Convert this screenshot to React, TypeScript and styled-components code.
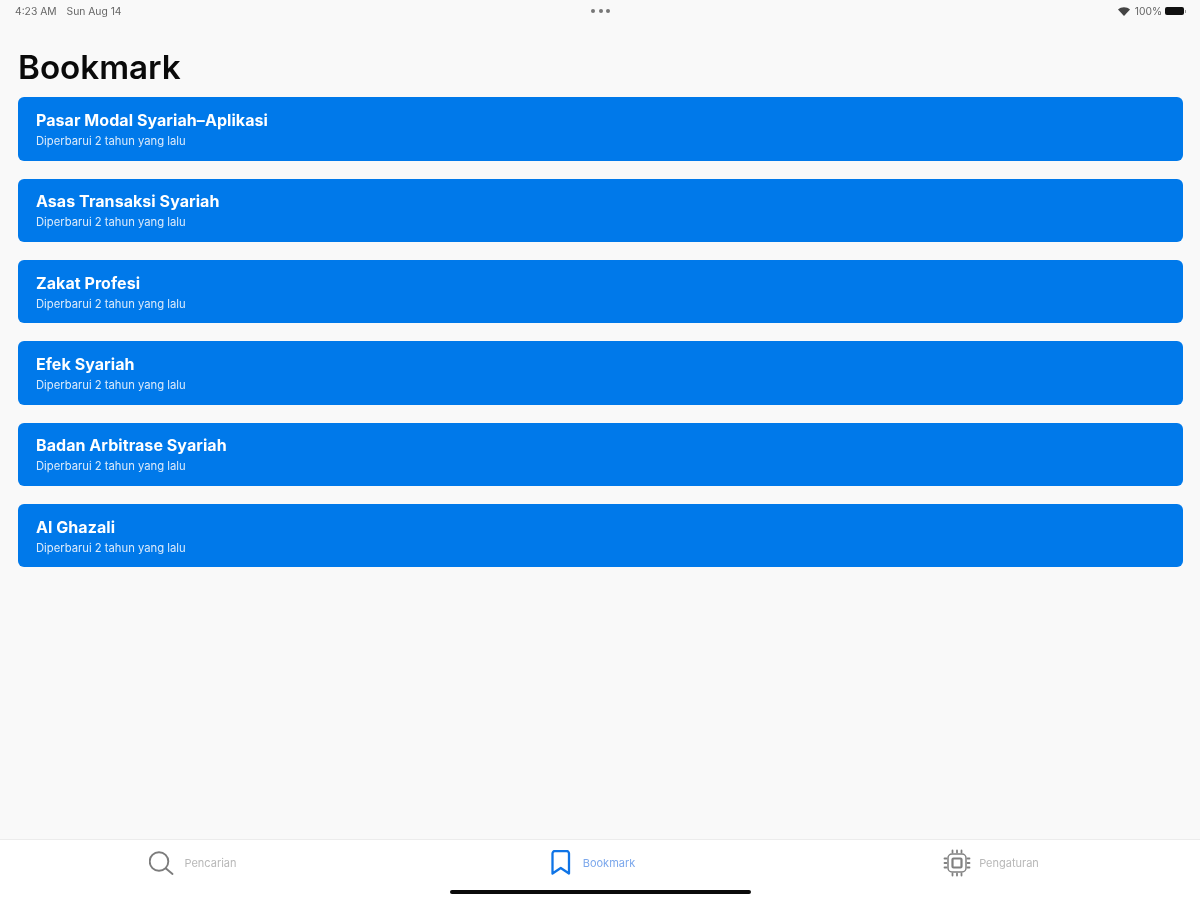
import React from "react";
import styled, { createGlobalStyle } from "styled-components";

const Global = createGlobalStyle`
  html, body { margin: 0; padding: 0; background: #f9f9f9; }
  body { font-family: Inter, "Liberation Sans", sans-serif; }
`;

const Screen = styled.div`
  width: 1200px;
  height: 900px;
  display: flex;
  flex-direction: column;
  overflow: hidden;
  background: #f9f9f9;
  filter: blur(0.7px);
`;

const StatusBar = styled.div`
  height: 22px;
  padding: 0 14px 0 15px;
  display: grid;
  grid-template-columns: 1fr auto 1fr;
  align-items: center;
  color: #666;
  font-size: 10.3px;
  flex: none;
`;

const StatusLeft = styled.div`
  display: flex;
  gap: 10px;
`;

const StatusDots = styled.div`
  display: flex;
  gap: 3.3px;
`;

const Dot = styled.span`
  width: 4px;
  height: 4px;
  border-radius: 50%;
  background: #777;
`;

const StatusRight = styled.div`
  display: flex;
  justify-content: flex-end;
  align-items: center;
  gap: 3px;
`;

const WifiGlyph = styled.svg`
  width: 12px;
  height: 9px;
  margin-right: 2px;
  fill: #444;
`;

const Battery = styled.span`
  width: 19px;
  height: 8px;
  border-radius: 2px;
  background: #111;
  margin-right: 2px;
  position: relative;
  &::after {
    content: "";
    position: absolute;
    right: -2px;
    top: 2.5px;
    width: 1.5px;
    height: 3px;
    background: #999;
  }
`;

const Main = styled.main`
  flex: 1;
  padding: 0 17px 0 18px;
  min-height: 0;
`;

const Title = styled.h1`
  margin: 0;
  padding-top: 25px;
  height: 50.3px;
  box-sizing: content-box;
  font-size: 33.2px;
  line-height: 41px;
  font-weight: 600;
  color: #0a0a0a;
`;

const List = styled.div`
  display: flex;
  flex-direction: column;
  gap: 18px;
`;

const Card = styled.div`
  height: 63.33px;
  box-sizing: border-box;
  padding: 12.7px 18px 0;
  background: #0079ea;
  border-radius: 6px;
  color: #fff;
`;

const CardTitle = styled.div`
  font-size: 16px;
  line-height: 20px;
  font-weight: 700;
  letter-spacing: 0.06px;
`;

const CardSub = styled.div`
  margin-top: 5px;
  font-size: 11.25px;
  line-height: 13px;
  color: #dcebfb;
`;

const TabBar = styled.nav`
  height: 61px;
  flex: none;
  box-sizing: border-box;
  background: #fff;
  border-top: 1px solid #ececec;
  position: relative;
  display: grid;
  grid-template-columns: repeat(3, 1fr);
  padding-top: 10px;
`;

const Tab = styled.div<{ $active?: boolean; $gap?: number; $end?: number }>`
  display: flex;
  justify-content: center;
  align-items: flex-start;
  gap: ${(p) => p.$gap ?? 10}px;
  padding-right: ${(p) => p.$end ?? 14}px;
  color: ${(p) => (p.$active ? "#7ca8ec" : "#b8b8b8")};
  font-size: 11px;
  line-height: 26px;
`;

const HomeIndicator = styled.div`
  position: absolute;
  left: 450px;
  bottom: 6px;
  width: 301px;
  height: 4px;
  border-radius: 2px;
  background: #0a0a0a;
`;

const ChipSlot = styled.span`
  display: block;
  margin-top: -1px;
  height: 28px;
`;

const cards = [
  "Pasar Modal Syariah–Aplikasi",
  "Asas Transaksi Syariah",
  "Zakat Profesi",
  "Efek Syariah",
  "Badan Arbitrase Syariah",
  "Al Ghazali",
];

const SearchIcon = () => (
  <svg width="25" height="26" viewBox="0 0 25 26" fill="none" stroke="#7c7c7c" strokeWidth="1.9" strokeLinecap="round">
    <circle cx="10" cy="11.5" r="9.3" />
    <path d="M17 18.5 L23.5 24" />
  </svg>
);

const BookmarkIcon = () => (
  <svg width="22" height="26" viewBox="0 0 22 26" fill="none" stroke="#0f74e6" strokeWidth="2.3" strokeLinejoin="round">
    <path d="M1.5 3.5 a2.5 2.5 0 0 1 2.5 -2.5 h11.5 a2.5 2.5 0 0 1 2.5 2.5 V23.5 L9.75 18 L1.5 23.5 Z" />
  </svg>
);

const ChipIcon = () => (
  <svg width="28" height="28" viewBox="0 0 28 28" fill="none" stroke="#808080" strokeLinecap="round">
    <rect x="5" y="5" width="18" height="18" rx="4" strokeWidth="1.5" />
    <rect x="9.5" y="9.5" width="9" height="9" rx="1" strokeWidth="2.2" />
    <path
      strokeWidth="1.8"
      d="M9.5 1.5v2M14 1.5v2M18.5 1.5v2M9.5 24.5v2M14 24.5v2M18.5 24.5v2M1.5 9.5h2M1.5 14h2M1.5 18.5h2M24.5 9.5h2M24.5 14h2M24.5 18.5h2"
    />
  </svg>
);

const WifiIcon = () => (
  <WifiGlyph viewBox="0 0 12 9">
    <path d="M6 9 L0 2.6 C3.4 -0.6 8.6 -0.6 12 2.6 Z" />
  </WifiGlyph>
);

export default function App() {
  return (
    <Screen>
      <Global />
      <StatusBar>
        <StatusLeft>
          <span>4:23 AM</span>
          <span>Sun Aug 14</span>
        </StatusLeft>
        <StatusDots>
          <Dot />
          <Dot />
          <Dot />
        </StatusDots>
        <StatusRight>
          <WifiIcon />
          <span>100%</span>
          <Battery />
        </StatusRight>
      </StatusBar>
      <Main>
        <Title>Bookmark</Title>
        <List>
          {cards.map((c) => (
            <Card key={c}>
              <CardTitle>{c}</CardTitle>
              <CardSub>Diperbarui 2 tahun yang lalu</CardSub>
            </Card>
          ))}
        </List>
      </Main>
      <TabBar>
        <Tab>
          <SearchIcon />
          <span>Pencarian</span>
        </Tab>
        <Tab $active>
          <BookmarkIcon />
          <span>Bookmark</span>
        </Tab>
        <Tab $gap={8} $end={18}>
          <ChipSlot>
            <ChipIcon />
          </ChipSlot>
          <span>Pengaturan</span>
        </Tab>
        <HomeIndicator />
      </TabBar>
    </Screen>
  );
}
